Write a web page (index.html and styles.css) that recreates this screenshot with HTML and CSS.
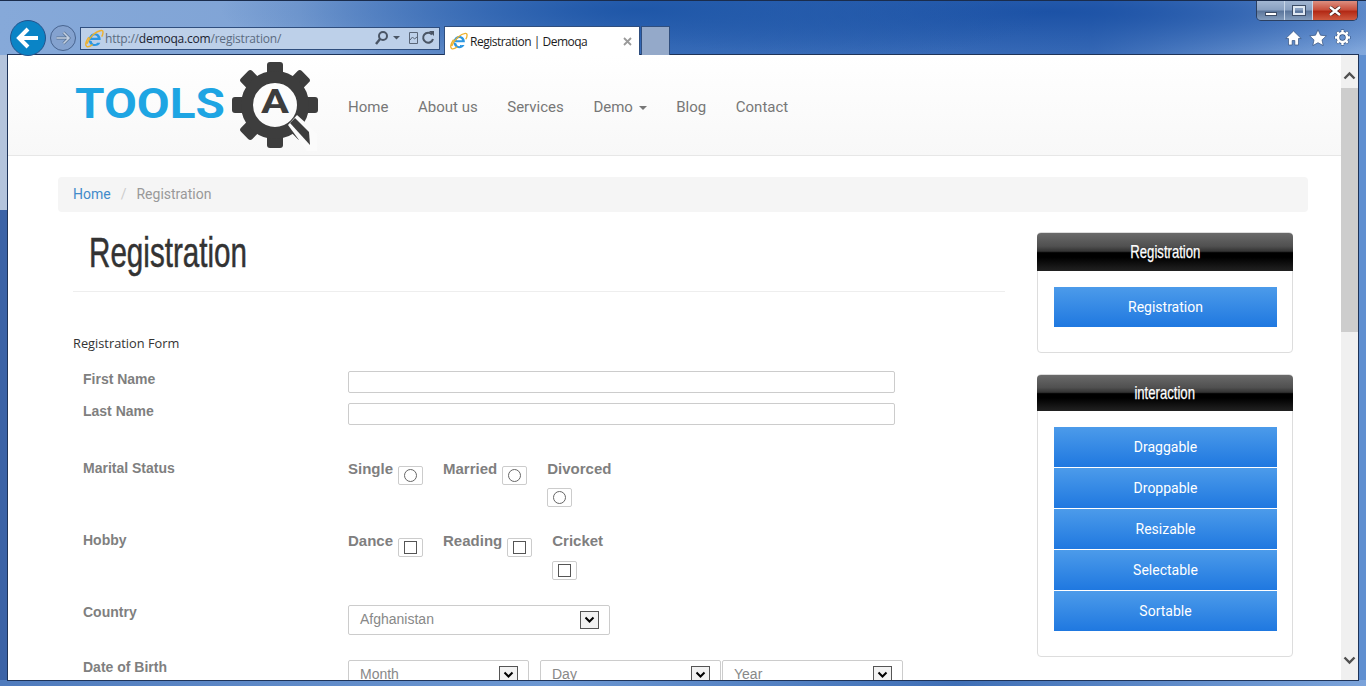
FILE: index.html
```html
<!DOCTYPE html>
<html lang="en">
<head>
    <meta charset="UTF-8">
    <title>Registration | Demoqa</title>
    <link rel="stylesheet" href="styles.css">
</head>
<body>
    <svg class="defs" width="0" height="0">
        <symbol id="ie" viewBox="0 0 20 20">
            <path d="M4 11.500h12.500c.3-4-2.300-7-6.200-7-3.600 0-6.300 3-6.300 7 0 4 2.700 6.500 6.300 6.500 2.700 0 4.800-1.300 5.800-3.500h-3.300c-.6.900-1.400 1.300-2.500 1.300-1.700 0-3-1.200-3.100-3M7.300 9.300c.2-1.600 1.400-2.600 3-2.600s2.800 1 3 2.600z" fill="#2b97e2" fill-rule="evenodd"/>
            <path d="M2 15.500C5 8 12 2 17 1.500c2.500-.2 2.500 3 .6 6.500M4 8.500C1 13 .2 17 1.800 18.300c1.300 1 4-.2 6.200-1.800" fill="none" stroke="#eeb12e" stroke-width="1.500"/>
        </symbol>
        <symbol id="chevron" viewBox="0 0 11 8">
            <path d="M1.500 1.500 5.500 5.500 9.500 1.500" fill="none" stroke="#000" stroke-width="2"/>
        </symbol>
    </svg>

    <div class="chrome">
        <div class="window-controls">
            <span class="win-btn"><i class="min-mark"></i></span>
            <span class="win-btn"><i class="max-mark"></i></span>
            <span class="win-btn win-close">
                <svg width="18" height="10" viewBox="0 0 18 10"><path d="M4 1 14 9M14 1 4 9" stroke="#3a1a14" stroke-width="3.600"/><path d="M4 1 14 9M14 1 4 9" stroke="#fff" stroke-width="2.400"/></svg>
            </span>
        </div>
        <span class="back-btn">
            <svg width="24" height="22" viewBox="0 0 24 22"><path d="M12 2 3 11l9 9M4 11h18" fill="none" stroke="#fff" stroke-width="4"/></svg>
        </span>
        <span class="forward-btn">
            <svg width="16" height="14" viewBox="0 0 16 14"><path d="M8.500 1.500 14 7l-5.500 5.500M14 7H1.500" fill="none" stroke="#56708f" stroke-width="3"/><path d="M8.500 1.500 14 7l-5.500 5.500M14 7H1.500" fill="none" stroke="#c3d0e2" stroke-width="1.600"/></svg>
        </span>
        <div class="address">
            <svg class="ie-icon" width="19" height="19"><use href="#ie"/></svg>
            <span class="url">http://<b>demoqa.com</b>/registration/</span>
            <svg class="addr-tools" width="62" height="16" viewBox="0 0 62 16">
                <circle cx="9" cy="6" r="4" fill="none" stroke="#4a5565" stroke-width="2"/>
                <path d="M6 9 2 14" stroke="#4a5565" stroke-width="2.400"/>
                <path d="M19 6h7l-3.500 3.500z" fill="#4a5565"/>
                <path d="M35.500 2.500h8v11h-8zM36 10l2.500-3 2 2 2.500-2" fill="none" stroke="#5a6678"/>
                <path d="M58 4.500A5 5 0 1 0 59 9" fill="none" stroke="#4a5565" stroke-width="2"/>
                <path d="M55 1h5v5z" fill="#4a5565"/>
            </svg>
        </div>
        <div class="tab">
            <svg class="ie-icon" width="18" height="18"><use href="#ie"/></svg>
            <span class="tab-title">Registration | Demoqa</span>
            <svg class="tab-close" width="9" height="9" viewBox="0 0 9 9"><path d="M1 1l7 7M8 1 1 8" stroke="#9a9a9a" stroke-width="1.800"/></svg>
        </div>
        <div class="new-tab"></div>
        <div class="chrome-icons">
            <svg width="17" height="16" viewBox="0 0 17 16"><path d="M8.500 1 .8 8.500h2.700V15h3.700v-4.500h2.600V15h3.700V8.500h2.700z" fill="#fff" stroke="#33507c" stroke-width=".7"/></svg>
            <svg width="18" height="17" viewBox="0 0 18 17"><path d="M9 .8l2.500 5.400 5.800.7-4.300 4 1.200 5.700L9 13.700l-5.200 2.900L5 10.900l-4.300-4 5.800-.7z" fill="#fff" stroke="#33507c" stroke-width=".7"/></svg>
            <svg width="17" height="17" viewBox="0 0 17 17"><circle cx="8.500" cy="8.500" r="4.500" fill="none" stroke="#33507c" stroke-width="4"/><path d="M8.500 .5v3.500M8.500 13v3.500M.5 8.500H4M13 8.500h3.500M2.800 2.800l2.400 2.400M11.800 11.800l2.400 2.400M14.200 2.800l-2.400 2.400M5.200 11.800l-2.400 2.400" stroke="#33507c" stroke-width="3.200"/><circle cx="8.500" cy="8.500" r="4.500" fill="none" stroke="#fff" stroke-width="2.600"/><path d="M8.500 1v3M8.500 13v3M1 8.500h3M13 8.500h3M3.200 3.200l2.100 2.100M11.700 11.700l2.100 2.100M13.800 3.200l-2.100 2.100M5.300 11.700l-2.100 2.100" stroke="#fff" stroke-width="2.400"/></svg>
        </div>
    </div>

    <div class="viewport">
        <div class="page">
            <header class="site-header">
                <svg class="logo" width="245" height="100" viewBox="0 0 245 100">
                    <text class="logo-word" x="0" y="63" textLength="150" lengthAdjust="spacingAndGlyphs">TOOLS</text>
                    <g fill="#3d3d3d" transform="translate(200 50)">
                        <rect x="-8" y="-43" width="16" height="16" rx="3"/>
                        <rect x="-8" y="-43" width="16" height="16" rx="3" transform="rotate(45)"/>
                        <rect x="-8" y="-43" width="16" height="16" rx="3" transform="rotate(90)"/>
                        <rect x="-8" y="-43" width="16" height="16" rx="3" transform="rotate(135)"/>
                        <rect x="-8" y="-43" width="16" height="16" rx="3" transform="rotate(180)"/>
                        <rect x="-8" y="-43" width="16" height="16" rx="3" transform="rotate(225)"/>
                        <rect x="-8" y="-43" width="16" height="16" rx="3" transform="rotate(270)"/>
                        <rect x="-8" y="-43" width="16" height="16" rx="3" transform="rotate(315)"/>
                        <circle r="28" fill="none" stroke="#3d3d3d" stroke-width="12"/>
                    </g>
                    <path d="M213 70 222 60 242 78V96H232z" fill="#fbfbfb"/>
                    <path d="M215 68 220 63 234 77 235 90z" fill="#3d3d3d"/>
                    <text class="logo-a" x="186" y="58" textLength="28" lengthAdjust="spacingAndGlyphs">A</text>
                </svg>
                <nav>
                    <ul class="main-nav">
                        <li>Home</li>
                        <li>About us</li>
                        <li>Services</li>
                        <li>Demo <span class="caret"></span></li>
                        <li>Blog</li>
                        <li>Contact</li>
                    </ul>
                </nav>
            </header>

            <div class="container">
                <div class="breadcrumb">
                    <a href="#">Home</a>
                    <span class="crumb-sep">/</span>
                    <span class="crumb-now">Registration</span>
                </div>

                <div class="content-row">
                    <main class="main-col">
                        <h1 class="page-title"><span class="narrow">Registration</span></h1>
                        <p class="form-title">Registration Form</p>
                        <form class="reg-form">
                            <div class="form-row row-name">
                                <label>First Name</label>
                                <div class="text-input"></div>
                            </div>
                            <div class="form-row row-last">
                                <label>Last Name</label>
                                <div class="text-input"></div>
                            </div>
                            <div class="form-row row-choice">
                                <label>Marital Status</label>
                                <div class="options">
                                    <div class="option">Single <span class="pick"><i class="radio"></i></span></div>
                                    <div class="option">Married <span class="pick"><i class="radio"></i></span></div>
                                    <div class="option option-stack">Divorced <span class="pick"><i class="radio"></i></span></div>
                                </div>
                            </div>
                            <div class="form-row row-choice">
                                <label>Hobby</label>
                                <div class="options">
                                    <div class="option">Dance <span class="pick"><i class="check"></i></span></div>
                                    <div class="option">Reading <span class="pick"><i class="check"></i></span></div>
                                    <div class="option option-stack stack-check">Cricket <span class="pick"><i class="check"></i></span></div>
                                </div>
                            </div>
                            <div class="form-row row-country">
                                <label>Country</label>
                                <div class="select select-country">Afghanistan<span class="arrow"><svg width="11" height="8"><use href="#chevron"/></svg></span></div>
                            </div>
                            <div class="form-row">
                                <label>Date of Birth</label>
                                <div class="date-selects">
                                    <div class="select select-month">Month<span class="arrow"><svg width="11" height="8"><use href="#chevron"/></svg></span></div>
                                    <div class="select select-day">Day<span class="arrow"><svg width="11" height="8"><use href="#chevron"/></svg></span></div>
                                    <div class="select select-year">Year<span class="arrow"><svg width="11" height="8"><use href="#chevron"/></svg></span></div>
                                </div>
                            </div>
                        </form>
                    </main>

                    <aside class="sidebar">
                        <section class="widget">
                            <h3 class="widget-title"><span class="narrow">Registration</span></h3>
                            <div class="widget-body">
                                <a class="side-btn" href="#">Registration</a>
                            </div>
                        </section>
                        <section class="widget">
                            <h3 class="widget-title title-short"><span class="narrow">interaction</span></h3>
                            <div class="widget-body">
                                <a class="side-btn" href="#">Draggable</a>
                                <a class="side-btn" href="#">Droppable</a>
                                <a class="side-btn" href="#">Resizable</a>
                                <a class="side-btn" href="#">Selectable</a>
                                <a class="side-btn" href="#">Sortable</a>
                            </div>
                        </section>
                    </aside>
                </div>
            </div>
        </div>
        <div class="scrollbar">
            <div class="scroll-arrow">
                <svg width="13" height="9" viewBox="0 0 13 9"><path d="M1.500 7.500l5-5 5 5" fill="none" stroke="#505050" stroke-width="2.400"/></svg>
            </div>
            <div class="scroll-thumb"></div>
            <div class="scroll-arrow scroll-arrow-down">
                <svg width="13" height="9" viewBox="0 0 13 9"><path d="M1.500 1.500l5 5 5-5" fill="none" stroke="#505050" stroke-width="2.400"/></svg>
            </div>
        </div>
    </div>
    <div class="frame-bottom"></div>
</body>
</html>
```

FILE: styles.css
```css
* {
    box-sizing: border-box;
}
html, body {
    margin: 0;
    padding: 0;
    height: 686px;
    overflow: hidden;
}
body {
    width: 1366px;
    font-family: "Roboto", sans-serif;
    color: #333;
    background:
        linear-gradient(#3a62a6, #3a62a6) 0 210px / 7px 476px no-repeat,
        linear-gradient(#b4c4dc, #b4c4dc) 0 55px / 7px 155px no-repeat,
        linear-gradient(#5f8fd0, #5f8fd0) 1359px 55px / 7px 631px no-repeat,
        radial-gradient(ellipse 420px 60px at 640px 10px, #1f57a8 0%, rgba(31, 87, 168, 0) 100%),
        radial-gradient(ellipse 500px 50px at 1050px 12px, #1c52a6 0%, rgba(28, 82, 166, 0) 100%),
        linear-gradient(90deg, #86a9d9 0%, #7fa3d5 22%, #3f72bd 48%, #3a6cb8 80%, #82a8dc 100%);
    border-top: 1px solid #1a2c4c;
}
.defs {
    position: absolute;
}
.narrow {
    display: inline-block;
    transform: scaleX(.71);
    -webkit-text-stroke: .25px currentColor;
}

/* browser frame */
.chrome {
    position: relative;
    height: 54px;
    padding-top: 19px;
    display: flex;
    align-items: center;
}
.window-controls {
    position: absolute;
    top: 0;
    right: 8px;
    width: 102px;
    height: 20px;
    display: flex;
    border: 1px solid #2b3f60;
    border-top: 0;
    border-radius: 0 0 5px 5px;
    overflow: hidden;
}
.win-btn {
    width: 28px;
    display: flex;
    align-items: center;
    justify-content: center;
    border-right: 1px solid #c8d6e8;
    background: linear-gradient(#a2b6d2 0%, #8aa1c1 45%, #5c779c 55%, #849dbd 100%);
}
.win-close {
    flex: 1;
    border-right: 0;
    background: linear-gradient(#dd8f80 0%, #c9513e 45%, #b32a16 55%, #cf5a40 100%);
}
.min-mark {
    display: block;
    width: 12px;
    height: 4px;
    margin-top: 7px;
    background: #fff;
    border: 1px solid #3d4d66;
}
.max-mark {
    display: block;
    width: 12px;
    height: 9px;
    border: 2px solid #dfe8f2;
    outline: 1px solid #3d4d66;
}
.back-btn {
    width: 36px;
    height: 36px;
    margin-left: 10px;
    border-radius: 50%;
    background: #0a84c6;
    border: 1px solid #24538c;
    display: flex;
    align-items: center;
    justify-content: center;
}
.forward-btn {
    width: 26px;
    height: 26px;
    margin-left: 4px;
    border-radius: 50%;
    background: #84a2cf;
    border: 1px solid #48648f;
    display: flex;
    align-items: center;
    justify-content: center;
}
.address {
    width: 360px;
    height: 23px;
    margin-top: 1px;
    margin-left: 4px;
    padding: 0 4px;
    display: flex;
    align-items: center;
    background: #bdd0e9;
    border: 1px solid #2f4e7e;
}
.ie-icon {
    flex: none;
}
.url {
    margin-left: 1px;
    font: 12px "Open Sans", sans-serif;
    letter-spacing: -.2px;
    color: #5b6b80;
}
.url b {
    font-weight: 400;
    color: #1a2230;
}
.addr-tools {
    margin-left: auto;
    margin-right: -1px;
}
.tab {
    align-self: flex-end;
    width: 196px;
    height: 29px;
    margin-left: 4px;
    padding: 0 4px 0 5px;
    display: flex;
    align-items: center;
    background: #fff;
    border: 1px solid #2f4e7e;
    border-bottom: 0;
}
.tab-title {
    margin-left: 2px;
    font: 12px "Open Sans", sans-serif;
    letter-spacing: -.5px;
    color: #1b1b1b;
}
.tab-close {
    margin-left: auto;
    margin-right: 3px;
}
.new-tab {
    align-self: flex-end;
    width: 29px;
    height: 29px;
    margin-left: 1px;
    background: #94a9c9;
    border: 1px solid #2f4e7e;
    border-bottom: 0;
}
.chrome-icons {
    margin-left: auto;
    margin-right: 15px;
    display: flex;
    align-items: center;
    gap: 7px;
}

.viewport {
    height: 625px;
    margin: 0 8px 0 8px;
    display: flex;
    outline: 1px solid #1e3358;
    overflow: hidden;
}
.page {
    width: 1333px;
    background: #fff;
    overflow: hidden;
}
.scrollbar {
    width: 17px;
    background: #f0f0f0;
    display: flex;
    flex-direction: column;
}
.scroll-arrow {
    height: 33px;
    display: flex;
    align-items: center;
    justify-content: center;
    padding-top: 7px;
}
.scroll-thumb {
    height: 244px;
    background: #cdcdcd;
}
.scroll-arrow-down {
    margin-top: auto;
    padding-top: 0;
    padding-bottom: 7px;
}
.frame-bottom {
    height: 6px;
    background: linear-gradient(90deg, #4f7bbd, #6c97d2 40%, #3f6fb6 70%, #7ba3da);
}

/* site header */
.site-header {
    height: 101px;
    padding-left: 67px;
    display: flex;
    align-items: center;
    background: linear-gradient(#fff, #f8f8f8);
    border-bottom: 1px solid #e7e7e7;
}
.logo {
    flex: none;
    display: block;
}
.logo-word {
    font: 700 42px "Roboto", sans-serif;
    fill: #1ea5e3;
}
.logo-a {
    font: 700 34px "Roboto", sans-serif;
    fill: #3d3d3d;
}
.main-nav {
    list-style: none;
    margin: 4px 0 0 28px;
    padding: 0;
    display: flex;
    gap: 29.6px;
    font-size: 15px;
    color: #777;
}
.caret {
    display: inline-block;
    margin-left: 2px;
    vertical-align: middle;
    border-top: 4px solid #777;
    border-left: 4px solid transparent;
    border-right: 4px solid transparent;
}

.container {
    padding: 21px 33px 0 50px;
}
.breadcrumb {
    height: 35px;
    padding: 0 15px 2px;
    display: flex;
    align-items: center;
    background: #f5f5f5;
    border-radius: 4px;
    font-size: 14px;
}
.breadcrumb a {
    color: #428bca;
    text-decoration: none;
}
.crumb-sep {
    margin: 0 10px;
    color: #ccc;
}
.crumb-now {
    color: #999;
}

.content-row {
    margin-top: 21px;
    padding: 0 15px;
    display: flex;
    gap: 32px;
}
.main-col {
    width: 932px;
}
.page-title {
    margin: 0;
    padding: 0 0 18px 16px;
    font: 400 42px/40px "Liberation Sans", sans-serif;
    color: #333;
    border-bottom: 1px solid #eee;
}
.page-title .narrow {
    transform-origin: left center;
    transform: scaleX(.705);
    -webkit-text-stroke: .5px currentColor;
}
.form-title {
    margin: 44px 0 21px;
    font: 12.800px/14px "Open Sans", sans-serif;
    color: #333;
}
.reg-form {
    padding-left: 10px;
    font-family: "Liberation Sans", sans-serif;
}
.form-row {
    display: grid;
    grid-template-columns: 265px 1fr;
}
.form-row label {
    font-size: 14px;
    line-height: 16px;
    font-weight: 700;
    color: #7f7f7f;
}
.row-name {
    height: 32px;
}
.row-last {
    height: 57px;
}
.row-choice {
    height: 72px;
}
.row-country {
    height: 55px;
}
.text-input {
    width: 547px;
    height: 22px;
    background: #fff;
    border: 1px solid #ccc;
    border-radius: 2px;
}
.options {
    display: flex;
    gap: 20px;
    align-items: flex-start;
}
.option {
    display: flex;
    gap: 5px;
    align-items: flex-start;
    padding-top: 1px;
    font-size: 15px;
    line-height: 16px;
    font-weight: 700;
    color: #7f7f7f;
}
.option-stack {
    flex-direction: column;
    gap: 11px;
}
.stack-check {
    gap: 12px;
}
.pick {
    width: 25px;
    height: 19px;
    margin-top: 5px;
    display: flex;
    align-items: center;
    justify-content: center;
    border: 1px solid #ccc;
    border-radius: 2px;
}
.option-stack .pick {
    margin-top: 0;
}
.radio {
    display: block;
    width: 13px;
    height: 13px;
    border: 1px solid #666;
    border-radius: 50%;
}
.check {
    display: block;
    width: 13px;
    height: 13px;
    border: 1px solid #555;
}
.select {
    height: 30px;
    margin-top: 1px;
    padding: 0 10px 2px 11px;
    display: flex;
    align-items: center;
    justify-content: space-between;
    background: #fff;
    border: 1px solid #ccc;
    border-radius: 2px;
    font-size: 14px;
    color: #888;
}
.select-country {
    width: 262px;
}
.date-selects {
    display: flex;
}
.select-month {
    width: 181px;
    margin-right: 11px;
}
.select-day,
.select-year {
    width: 181px;
    margin-right: 1px;
}
.arrow {
    width: 19px;
    height: 18px;
    margin-top: 2px;
    display: flex;
    align-items: center;
    justify-content: center;
    background: #f2f2f2;
    border: 1px solid #555;
}

/* right column */
.sidebar {
    width: 256px;
    margin-top: -1px;
    display: flex;
    flex-direction: column;
    gap: 21px;
}
.widget {
    border: 1px solid #ddd;
    border-radius: 4px;
}
.widget-title {
    margin: 0 -1px;
    height: 38px;
    text-align: center;
    font: 400 18.500px/37px "Liberation Sans", sans-serif;
    color: #fff;
    border-radius: 4px 4px 0 0;
    background: linear-gradient(#6a6a6a 0%, #505050 35%, #333 48%, #000 52%, #000 64%, #222 100%);
}
.title-short {
    height: 36px;
    line-height: 36px;
}
.widget-body {
    padding: 16px 15px 25px 16px;
    display: flex;
    flex-direction: column;
    gap: 1px;
}
.side-btn {
    height: 40px;
    line-height: 40px;
    text-align: center;
    font-size: 14px;
    color: #fff;
    text-decoration: none;
    background: linear-gradient(#4c9bea, #1f78e0);
}
```
